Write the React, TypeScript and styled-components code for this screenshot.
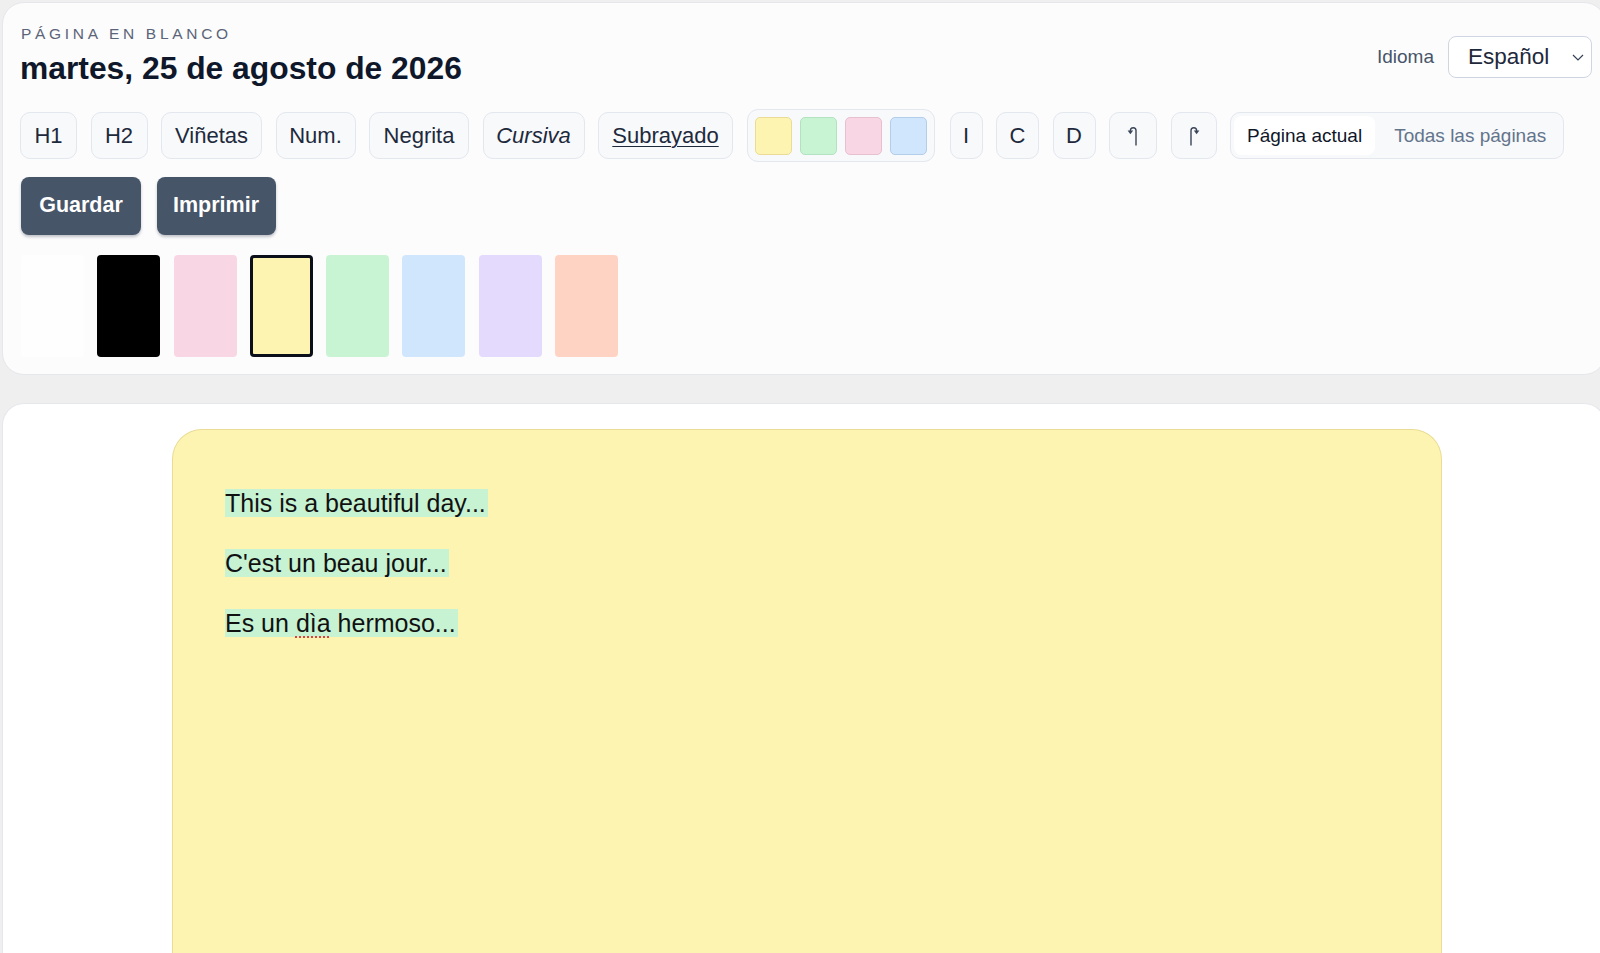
import React from "react";
import styled, { createGlobalStyle } from "styled-components";

const Global = createGlobalStyle`
  html, body { margin: 0; padding: 0; background: #efeff0; overflow: hidden; }
  body { font-family: "Liberation Sans", Arial, sans-serif; color: #0f172a; }
  * { box-sizing: border-box; }
`;

const Page = styled.div`
  width: 1608px;
  height: 953px;
  display: flex;
  flex-direction: column;
  gap: 28px;
  padding: 2px 2px 0 2px;
  overflow: hidden;
`;

const TopPanel = styled.section`
  background: #fcfcfd;
  border: 1px solid #e6e7eb;
  border-radius: 22px;
  padding: 22px 13px 17px 17px;
  display: flex;
  flex-direction: column;
`;

const HeaderRow = styled.div`
  display: flex;
  justify-content: space-between;
  align-items: center;
`;

const TitleBlock = styled.div`
  display: flex;
  flex-direction: column;
  gap: 7px;
`;

const Eyebrow = styled.div`
  font-size: 15.5px;
  letter-spacing: 3.7px;
  color: #5b6478;
  text-transform: uppercase;
  padding-left: 1px;
`;

const Title = styled.h1`
  margin: 0;
  font-size: 31.8px;
  font-weight: 700;
  color: #0f172a;
  line-height: 37px;
`;

const LangBlock = styled.div`
  display: flex;
  align-items: center;
  gap: 14px;
  margin-top: 2px;
`;

const LangLabel = styled.span`
  font-size: 19px;
  color: #475569;
`;

const SelectBox = styled.div`
  width: 144px;
  height: 42px;
  border: 1px solid #cfd6e2;
  border-radius: 8px;
  background: #fff;
  display: flex;
  align-items: center;
  justify-content: space-between;
  padding: 0 6px 0 19px;
  font-size: 22.5px;
  color: #1e293b;
`;

const Toolbar = styled.div`
  display: flex;
  align-items: center;
  gap: 13.5px;
  margin-top: 22px;
`;

const ToolButton = styled.button<{ $italic?: boolean; $underline?: boolean; $w: number }>`
  height: 47px;
  width: ${(p) => p.$w}px;
  padding: 0;
  border: 1px solid #e3e7ee;
  border-radius: 10px;
  background: #f7f9fb;
  font-family: "Liberation Sans", Arial, sans-serif;
  font-size: 22px;
  color: #1e293b;
  font-style: ${(p) => (p.$italic ? "italic" : "normal")};
  text-decoration: ${(p) => (p.$underline ? "underline" : "none")};
  text-underline-offset: 3px;
  text-decoration-thickness: 1px;
  display: flex;
  align-items: center;
  justify-content: center;
  cursor: pointer;
`;

const ColorGroup = styled.div`
  height: 53px;
  border: 1px solid #e3e7ee;
  border-radius: 11px;
  background: #f7f9fb;
  display: flex;
  align-items: center;
  gap: 7.5px;
  padding: 0 7px;
  margin-right: 1px;
`;

const MiniSwatch = styled.span<{ $c: string; $b: string }>`
  width: 37.5px;
  height: 38px;
  border-radius: 5px;
  background: ${(p) => p.$c};
  border: 1px solid ${(p) => p.$b};
`;

const Segmented = styled.div`
  height: 47px;
  border: 1px solid #e3e7ee;
  border-radius: 10px;
  background: #f7f9fb;
  display: flex;
  align-items: center;
  padding: 3px;
`;

const Segment = styled.span<{ $active?: boolean }>`
  height: 39px;
  display: flex;
  align-items: center;
  padding: 0 13px 0 13px;
  border-radius: 8px;
  font-size: 19px;
  background: ${(p) => (p.$active ? "#ffffff" : "transparent")};
  color: ${(p) => (p.$active ? "#0f172a" : "#64748b")};
  & + & { padding-left: 19px; padding-right: 14px; }
`;

const ActionRow = styled.div`
  display: flex;
  gap: 15.5px;
  margin-top: 14.5px;
  padding-left: 1px;
`;

const DarkButton = styled.button<{ $w: number }>`
  width: ${(p) => p.$w}px;
  height: 58px;
  border: none;
  border-radius: 8px;
  background: #475569;
  color: #fff;
  font-family: "Liberation Sans", Arial, sans-serif;
  font-size: 21.5px;
  font-weight: 700;
  box-shadow: 0 2px 3px rgba(15, 23, 42, 0.25);
  cursor: pointer;
`;

const SwatchRow = styled.div`
  display: flex;
  gap: 13.3px;
  margin-top: 20.5px;
  padding-left: 1px;
`;

const BigSwatch = styled.span<{ $c: string; $selected?: boolean }>`
  width: 63px;
  height: 102px;
  border-radius: 4px;
  background: ${(p) => p.$c};
  border: ${(p) => (p.$selected ? "3px solid #0b0f1a" : "none")};
`;

const BottomPanel = styled.section`
  flex: 1;
  background: #ffffff;
  border: 1px solid #e6e7eb;
  border-bottom: none;
  border-radius: 22px 22px 0 0;
  padding: 25px 0 0 169px;
`;

const Sheet = styled.div`
  width: 1270px;
  height: 700px;
  background: #fef4b1;
  border: 1px solid #eadc96;
  border-bottom: none;
  border-radius: 30px 30px 0 0;
  padding: 59px 52px;
  display: flex;
  flex-direction: column;
  align-items: flex-start;
  gap: 32px;
`;

const Line = styled.p`
  margin: 0;
  font-size: 25px;
  line-height: 28px;
  color: #111;
  background: #c8f3d3;
  padding-right: 2px;
`;

const Misspelled = styled.span`
  text-decoration: underline dotted #e0413a;
  text-underline-offset: 4px;
  text-decoration-thickness: 2px;
`;

const UndoIcon = ({ flip }: { flip?: boolean }) => (
  <svg
    width="12"
    height="22"
    viewBox="0 0 12 22"
    style={flip ? { transform: "scaleX(-1)" } : undefined}
  >
    <path d="M9 20.5 V5.5 a2.8 2.8 0 0 0 -5.6 0 V6" fill="none" stroke="#3b4658" strokeWidth="1.4" />
    <path d="M0.6 5.6 L6.2 5.6 L3.4 9.2 Z" fill="#3b4658" />
  </svg>
);

const Chevron = () => (
  <svg width="14" height="10" viewBox="0 0 14 10">
    <path d="M2 3 L7 8 L12 3" fill="none" stroke="#334155" strokeWidth="1.2" />
  </svg>
);

export default function App() {
  const big = ["#fefefe", "#000000", "#f9d6e4", "#fef4b1", "#c8f4d4", "#d0e6fd", "#e3dafd", "#fed3c3"];
  return (
    <>
      <Global />
      <Page>
        <TopPanel>
          <HeaderRow>
            <TitleBlock>
              <Eyebrow>Página en blanco</Eyebrow>
              <Title>martes, 25 de agosto de 2026</Title>
            </TitleBlock>
            <LangBlock>
              <LangLabel>Idioma</LangLabel>
              <SelectBox>
                Español
                <Chevron />
              </SelectBox>
            </LangBlock>
          </HeaderRow>
          <Toolbar>
            <ToolButton $w={57}>H1</ToolButton>
            <ToolButton $w={57}>H2</ToolButton>
            <ToolButton $w={101}>Viñetas</ToolButton>
            <ToolButton $w={80}>Num.</ToolButton>
            <ToolButton $w={100}>Negrita</ToolButton>
            <ToolButton $w={102} $italic>Cursiva</ToolButton>
            <ToolButton $w={135} $underline>Subrayado</ToolButton>
            <ColorGroup>
              <MiniSwatch $c="#fef4b1" $b="#eadc96" />
              <MiniSwatch $c="#c8f4d4" $b="#b2e2c0" />
              <MiniSwatch $c="#f9d6e4" $b="#e8bfd0" />
              <MiniSwatch $c="#d0e6fd" $b="#b4cdea" />
            </ColorGroup>
            <ToolButton $w={33}>I</ToolButton>
            <ToolButton $w={43}>C</ToolButton>
            <ToolButton $w={43}>D</ToolButton>
            <ToolButton $w={48}><UndoIcon /></ToolButton>
            <ToolButton $w={46}><UndoIcon flip /></ToolButton>
            <Segmented>
              <Segment $active>Página actual</Segment>
              <Segment>Todas las páginas</Segment>
            </Segmented>
          </Toolbar>
          <ActionRow>
            <DarkButton $w={120}>Guardar</DarkButton>
            <DarkButton $w={119}>Imprimir</DarkButton>
          </ActionRow>
          <SwatchRow>
            {big.map((c, i) => (
              <BigSwatch key={i} $c={c} $selected={i === 3} />
            ))}
          </SwatchRow>
        </TopPanel>
        <BottomPanel>
          <Sheet>
            <Line>This is a beautiful day...</Line>
            <Line>C'est un beau jour...</Line>
            <Line>
              Es un <Misspelled>dìa</Misspelled> hermoso...
            </Line>
          </Sheet>
        </BottomPanel>
      </Page>
    </>
  );
}
